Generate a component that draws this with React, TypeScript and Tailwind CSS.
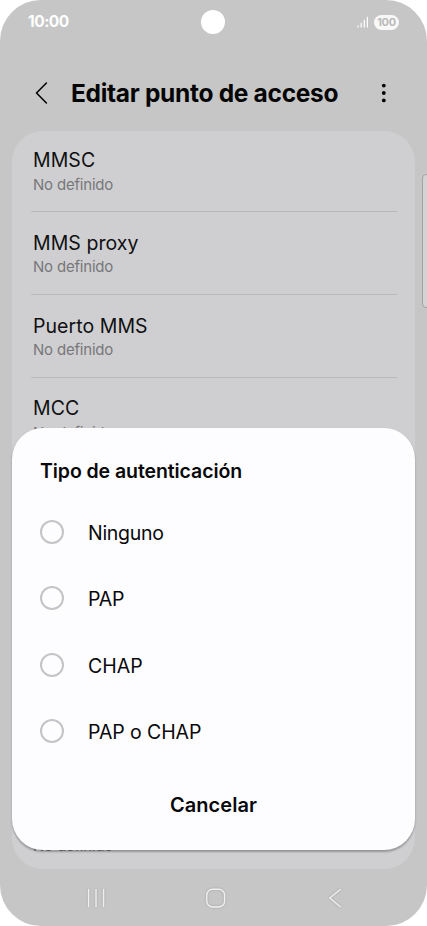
interface SettingRowProps {
  title: string;
  value: string;
}

const settings = ['MMSC', 'MMS proxy', 'Puerto MMS'];

const authOptions = [
  { label: 'Ninguno', tracking: 'tracking-[-0.3px]' },
  { label: 'PAP', tracking: 'tracking-[-0.2px]' },
  { label: 'CHAP', tracking: 'tracking-[0px]' },
  { label: 'PAP o CHAP', tracking: 'tracking-[-0.1px]' },
];

function SettingRow({ title, value }: SettingRowProps) {
  return (
    <div className="h-[82.8px] shrink-0 border-b border-[#b9b9bb] px-[2.5px] pt-[16.6px]">
      <p className="text-[19.5px] leading-7 tracking-[0.05px] text-[#101012]">{title}</p>
      <p className="pt-[0.5px] text-[15px] leading-5 tracking-[-0.2px] text-[#77777a]">{value}</p>
    </div>
  );
}

function StatusBar() {
  return (
    <div className="flex h-11 shrink-0 items-center justify-between pr-7 pl-[27px] text-white">
      <span className="w-20 pl-px text-[15.5px] font-bold tracking-[-0.5px]">10:00</span>
      <span className="size-6 rounded-full bg-white" />
      <div className="flex w-20 items-center justify-end gap-[5px]">
        <svg width="12" height="12" viewBox="0 0 12 12" fill="white">
          <rect x="0.5" y="9.5" width="1.2" height="2" />
          <rect x="3.6" y="6.8" width="1.2" height="4.7" />
          <rect x="6.7" y="3.7" width="1.2" height="7.8" />
          <rect x="9.8" y="0.8" width="1.2" height="10.7" />
        </svg>
        <span className="flex h-[15px] w-[25px] items-center justify-center rounded-full bg-[#f8f8f8] text-[11px] leading-[15px] font-bold tracking-[-0.3px] text-[#bababa]">
          100
        </span>
      </div>
    </div>
  );
}

function NavigationBar() {
  return (
    <div className="flex h-[57px] shrink-0 items-center justify-between pr-[82px] pl-[86px]">
      <svg width="20" height="20" viewBox="0 0 20 20" fill="none" stroke="#efefef" strokeWidth="1.4" strokeLinecap="round" className="drop-shadow-[0_0_1px_rgba(0,0,0,0.2)]">
        <path d="M2.6 1.5v17M10 1.5v17M17.6 1.5v17" />
      </svg>
      <svg width="20" height="20" viewBox="0 0 20 20" fill="none" stroke="#efefef" strokeWidth="1.4" className="drop-shadow-[0_0_1px_rgba(0,0,0,0.2)]">
        <rect x="0.8" y="1.2" width="17.8" height="17.8" rx="5.8" />
      </svg>
      <svg width="20" height="20" viewBox="0 0 20 20" fill="none" stroke="#efefef" strokeWidth="1.4" className="drop-shadow-[0_0_1px_rgba(0,0,0,0.2)]">
        <path d="M15.6 1.2 4.8 10l10.8 9" />
      </svg>
    </div>
  );
}

function AuthDialog() {
  return (
    <div className="absolute top-[428px] right-3 left-3 flex h-[422px] flex-col rounded-[31px] bg-[#fdfdff] px-[28px] text-[#09090b] shadow-[0_1.5px_2px_rgba(0,0,0,0.28)]">
      <h2 className="pt-[29px] text-[19.5px] leading-7 font-semibold tracking-[-0.08px]">Tipo de autenticación</h2>
      <div className="mt-[13.5px] flex flex-col">
        {authOptions.map((option) => (
          <label key={option.label} className="flex h-[66.5px] items-center gap-6">
            <span className="size-6 rounded-full border-2 border-[#c4c4c6]" />
            <span className={`pt-[1.5px] text-[19.5px] leading-7 ${option.tracking}`}>{option.label}</span>
          </label>
        ))}
      </div>
      <button className="mt-[26px] text-center text-[20px] leading-7 font-semibold tracking-[0.05px]">Cancelar</button>
    </div>
  );
}

export default function App() {
  return (
    <div className="h-[926px] w-[427px] overflow-hidden bg-white font-['Inter',sans-serif]">
      <div className="relative flex h-full flex-col overflow-hidden rounded-[41px] bg-[#c6c6c6]">
        <StatusBar />

        {/* Title bar */}
        <header className="flex h-[87px] shrink-0 items-center pt-[11px] pr-9 pl-[34px] text-[#050505]">
          <svg width="14" height="24" viewBox="0 0 14 24" fill="none" stroke="currentColor" strokeWidth="1.6" strokeLinecap="round" strokeLinejoin="round">
            <path d="M12.4 2 2.5 12l9.9 10" />
          </svg>
          <h1 className="ml-[23px] flex-1 text-[24.5px] font-bold tracking-[-0.3px] whitespace-nowrap">Editar punto de acceso</h1>
          <svg width="14" height="20" viewBox="0 0 14 20" fill="currentColor">
            <circle cx="6.8" cy="2.6" r="1.9" />
            <circle cx="6.8" cy="10" r="1.9" />
            <circle cx="6.8" cy="17.4" r="1.9" />
          </svg>
        </header>

        {/* Access point settings */}
        <main className="mx-3 flex min-h-0 flex-1 flex-col overflow-hidden rounded-[31px] bg-[#cfcfd1] px-[18.5px]">
          <div className="-mt-[1.6px]">
            {settings.map((title) => (
              <SettingRow key={title} title={title} value="No definido" />
            ))}
          </div>
          <div className="px-[2.5px] pt-[16.6px]">
            <p className="text-[19.5px] leading-7 tracking-[0.05px] text-[#101012]">MCC</p>
            <p className="pt-[0.5px] text-[15px] leading-5 tracking-[-0.2px] text-[#77777a]">No definido</p>
          </div>
          <p className="mt-auto mb-[13px] px-[2.5px] text-[15px] leading-5 tracking-[-0.2px] text-[#77777a]">No definido</p>
        </main>

        <NavigationBar />

        {/* Edge panel handle */}
        <div className="absolute top-[174px] -right-1 h-[134px] w-[9px] rounded-[4px] border border-[#a2a2a2] bg-[#d3d3d3]" />

        <AuthDialog />
      </div>
    </div>
  );
}
